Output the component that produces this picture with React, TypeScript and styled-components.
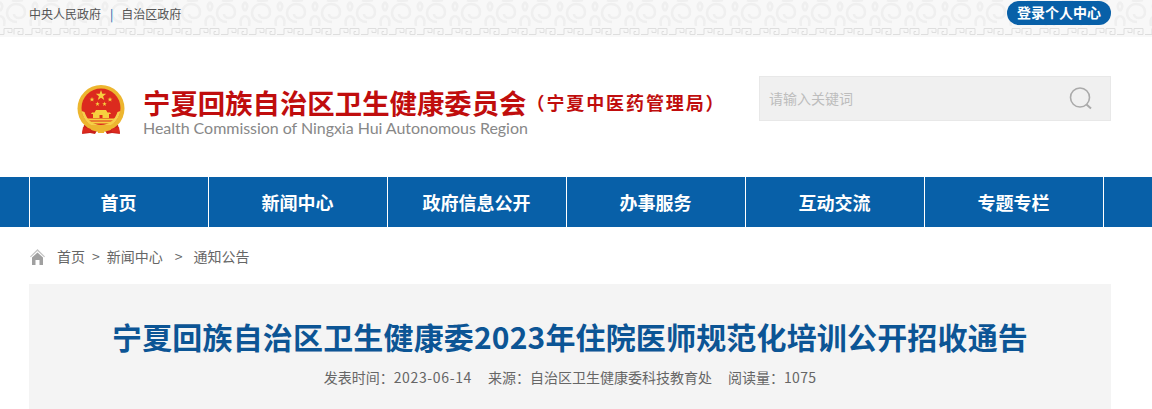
import React from 'react';
import styled, { createGlobalStyle } from 'styled-components';

const swirlTile = encodeURIComponent(
  `<svg xmlns="http://www.w3.org/2000/svg" width="35" height="27"><g fill="none" stroke="#efefef" stroke-width="2.600"><path d="M17 22c-6 0-10-4-10-9s4-9 9-9 9 3 9 8-3 6-6 6-5-2-5-4"/><path d="M0 2c3 3 3 6 0 9M35 2c-3 3-3 6 0 9M0 16c4 1 5 5 4 10M35 16c-4 1-5 5-4 10"/><path d="M12 0c2 1 8 1 11 0"/></g></svg>`
);

const keyTile = encodeURIComponent(
  `<svg xmlns="http://www.w3.org/2000/svg" width="28" height="10"><g fill="none" stroke="#dedede" stroke-width="1"><path d="M0 8.500h4v-6h8v4h-4v-2M14 8.500V2.500h9v6h-5v-3h2M28 8.500h-3"/></g></svg>`
);

const GlobalStyle = createGlobalStyle`
  html, body {
    margin: 0;
    padding: 0;
    background: #fff;
    overflow: hidden;
    font-family: "Noto Sans CJK SC", "Liberation Sans", sans-serif;
  }
`;

const TopBar = styled.div`
  height: 37px;
  box-sizing: border-box;
  padding: 1px 41px 0 29px;
  display: flex;
  justify-content: space-between;
  align-items: flex-start;
  background-color: #f8f8f8;
  background-image: url("data:image/svg+xml,${keyTile}"),
    url("data:image/svg+xml,${swirlTile}");
  background-repeat: repeat-x, repeat-x;
  background-position: 0 26px, 0 0;
`;

const TopLinks = styled.div`
  display: flex;
  align-items: center;
  height: 24px;
  font-size: 12px;
  color: #555;
`;

const Divider = styled.span`
  margin: 0 8px 0 9px;
  color: #0860a8;
`;

const LoginButton = styled.a`
  width: 104px;
  height: 24px;
  border-radius: 12px;
  background: #0860a8;
  color: #fff;
  font-size: 14px;
  font-weight: 700;
  line-height: 23px;
  text-align: center;
`;

const Header = styled.header`
  height: 140px;
  box-sizing: border-box;
  padding: 39px 41px 0 29px;
  display: flex;
  justify-content: space-between;
  align-items: flex-start;
`;

const Brand = styled.div`
  display: flex;
  align-items: flex-start;
  padding: 8px 0 0 48px;
`;

const Emblem = styled.svg`
  width: 48px;
  height: 52px;
  flex: none;
`;

const BrandText = styled.div`
  margin-left: 18px;
`;

const CnName = styled.div`
  display: flex;
  align-items: center;
  height: 36px;
  line-height: 36px;
  color: #c00d0d;
`;

const CnMain = styled.span`
  font-size: 27.400px;
  font-weight: 700;
  white-space: nowrap;
`;

const CnSub = styled.span`
  font-size: 18px;
  font-weight: 700;
  letter-spacing: 1.900px;
  white-space: nowrap;
`;

const EnName = styled.div`
  font-family: Lato, "Liberation Sans", sans-serif;
  font-size: 16px;
  line-height: 16px;
  letter-spacing: -0.040px;
  color: #888;
  white-space: nowrap;
`;

const SearchBox = styled.div`
  width: 352px;
  height: 45px;
  box-sizing: border-box;
  padding: 0 17px 0 10px;
  display: flex;
  align-items: center;
  justify-content: space-between;
  background: #f0f0f0;
  border: 1px solid #e8e8e8;
`;

const Placeholder = styled.span`
  margin: -2px 0 0 -1px;
  font-size: 14px;
  color: #bdbdbd;
`;

const Nav = styled.nav`
  height: 50px;
  padding-left: 29px;
  display: flex;
  background: #0860a8;
`;

const NavItem = styled.a`
  width: 179px;
  box-sizing: border-box;
  padding-right: 1px;
  border-left: 1px solid #fff;
  color: #fff;
  font-size: 18px;
  font-weight: 700;
  line-height: 50px;
  text-align: center;
`;

const NavEnd = styled.span`
  width: 1px;
  background: #fff;
`;

const Breadcrumb = styled.div`
  height: 57px;
  box-sizing: border-box;
  padding: 19px 0 0 30px;
  display: flex;
  align-items: flex-start;
  font-size: 14px;
  line-height: 20px;
  color: #666;
`;

const HomeIcon = styled.svg`
  width: 15px;
  height: 16px;
  margin-top: 3px;
  flex: none;
`;

const Crumb = styled.span<{ $gap?: number }>`
  margin-left: ${(p) => p.$gap ?? 0}px;
  white-space: nowrap;
`;

const ArticleHead = styled.section`
  margin: 0 41px 0 29px;
  height: 125px;
  box-sizing: border-box;
  padding-top: 29px;
  background: #f4f4f4;
  text-align: center;
`;

const ArticleTitle = styled.h1`
  margin: 0;
  font-size: 30px;
  font-weight: 700;
  line-height: 46px;
  letter-spacing: 0.160px;
  color: #0c5595;
`;

const Meta = styled.div`
  margin-top: 8px;
  font-size: 14px;
  line-height: 20px;
  color: #666;
`;

const MetaItem = styled.span`
  margin: 0 8px;
`;

const Figure = styled.span<{ $spacing: number }>`
  letter-spacing: ${(p) => p.$spacing}px;
`;

const navItems = ['首页', '新闻中心', '政府信息公开', '办事服务', '互动交流', '专题专栏'];

// five pointed star for the emblem
function starPoints(cx: number, cy: number, r: number) {
  const points: string[] = [];
  for (let i = 0; i < 10; i++) {
    const radius = i % 2 === 0 ? r : r * 0.4;
    const angle = (Math.PI / 5) * i - Math.PI / 2;
    points.push(`${(cx + radius * Math.cos(angle)).toFixed(2)},${(cy + radius * Math.sin(angle)).toFixed(2)}`);
  }
  return points.join(' ');
}

const NationalEmblem = () => (
  <Emblem viewBox="0 0 48 52" aria-hidden="true">
    <path d="M7 41l-2 9 8-1 5 1 3-5h6l3 5 5-1 8 1-2-9z" fill="#c9201c" />
    <circle cx="24" cy="24.500" r="23.500" fill="#edb62f" />
    <circle cx="24" cy="24" r="19.500" fill="#dc2a1e" />
    <path d="M4.500 27c2 10 10 17 19.500 17s17.500-7 19.500-17l-3 1C38 36 32 41 24 41S10 36 7.500 28z" fill="#f6cf4c" />
    <g fill="#f6d03f">
      <polygon points={starPoints(24, 11.500, 5.500)} />
      <polygon points={starPoints(15, 15.500, 2.600)} />
      <polygon points={starPoints(33, 15.500, 2.600)} />
      <polygon points={starPoints(20.500, 20, 2.400)} />
      <polygon points={starPoints(27.500, 20, 2.400)} />
      <path d="M19 26h10l1.500 2.500H33l1 1.500H14l1-1.500h2.500z" />
      <path d="M16 30h16v4H16z" />
      <path d="M10 34.500h28l-2 2H12zM12 37.500h24l-2.500 2h-19z" />
    </g>
    <path d="M22.500 31h3v3h-3z" fill="#dc2a1e" />
    <g fill="#edb62f">
      <path d="M13 41h22l-3 3H16z" />
      <path d="M20 43h8l-1 6h-6z" />
    </g>
    <path d="M6 43l8 2-1 3-8 1zM42 43l-8 2 1 3 8 1z" fill="#dc2a1e" />
  </Emblem>
);

const App: React.FC = function () {
  return (
    <>
      <GlobalStyle />
      <TopBar>
        <TopLinks>
          <span>中央人民政府</span>
          <Divider>|</Divider>
          <span>自治区政府</span>
        </TopLinks>
        <LoginButton>登录个人中心</LoginButton>
      </TopBar>
      <Header>
        <Brand>
          <NationalEmblem />
          <BrandText>
            <CnName>
              <CnMain>宁夏回族自治区卫生健康委员会</CnMain>
              <CnSub>（宁夏中医药管理局）</CnSub>
            </CnName>
            <EnName>Health Commission of Ningxia Hui Autonomous Region</EnName>
          </BrandText>
        </Brand>
        <SearchBox>
          <Placeholder>请输入关键词</Placeholder>
          <svg width="24" height="24" viewBox="0 0 24 24" fill="none" stroke="#aaa" aria-hidden="true">
            <circle cx="11" cy="10.500" r="9.500" strokeWidth="1.600" />
            <path d="M17.500 17.500l4.500 4" strokeWidth="2" />
          </svg>
        </SearchBox>
      </Header>
      <Nav>
        {navItems.map((item) => (
          <NavItem key={item}>{item}</NavItem>
        ))}
        <NavEnd />
      </Nav>
      <Breadcrumb>
        <HomeIcon viewBox="0 0 15 16" aria-hidden="true">
          <path d="M7.500 0L15 7.500l-.8.8L7.500 2 .8 8.300 0 7.500z" fill="#c4c4c4" />
          <path d="M2 8.500l5.500-5L13 8.500V16H9.500v-5h-4v5H2z" fill="#a0a0a0" />
        </HomeIcon>
        <Crumb $gap={12}>首页</Crumb>
        <Crumb $gap={7}>&gt;</Crumb>
        <Crumb $gap={7}>新闻中心</Crumb>
        <Crumb $gap={12}>&gt;</Crumb>
        <Crumb $gap={11}>通知公告</Crumb>
      </Breadcrumb>
      <ArticleHead>
        <ArticleTitle>宁夏回族自治区卫生健康委2023年住院医师规范化培训公开招收通告</ArticleTitle>
        <Meta>
          <MetaItem>
            发表时间：<Figure $spacing={0.65}>2023-06-14</Figure>
          </MetaItem>
          <MetaItem>来源：自治区卫生健康委科技教育处</MetaItem>
          <MetaItem>
            阅读量：<Figure $spacing={0.3}>1075</Figure>
          </MetaItem>
        </Meta>
      </ArticleHead>
    </>
  );
};

export default App;
